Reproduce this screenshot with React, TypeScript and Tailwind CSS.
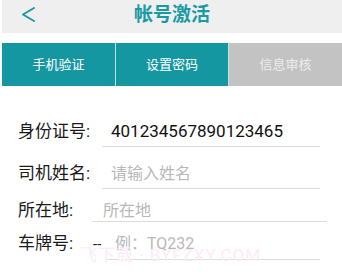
import React from "react";

const font = { fontFamily: 'Roboto, "Noto Sans CJK SC", sans-serif' };

export default function App() {
  return (
    <div
      className="relative w-[342px] h-[275px] bg-white overflow-hidden font-['Roboto','Noto_Sans_CJK_SC',sans-serif]"
      style={font}
    >
      {/* Header */}
      <div className="ml-[2px] h-[33px] bg-[#efefef] relative flex items-center justify-center">
        <svg
          className="absolute left-[19px] top-[6px]"
          width="15"
          height="17"
          viewBox="0 0 15 17"
          fill="none"
        >
          <polyline
            points="13,2 2,8.5 13,15"
            stroke="#1a9aa5"
            strokeWidth="2"
            strokeLinecap="round"
            strokeLinejoin="round"
          />
        </svg>
        <span className="text-[19px] leading-[24px] font-bold text-[#1a9aa5] -mt-[3px]">
          帐号激活
        </span>
      </div>

      {/* Tabs */}
      <div className="ml-[2px] mt-[10px] h-[43px] flex gap-px bg-[#bfe3e5]">
        <div className="w-[113px] bg-[#1597a1] flex items-center justify-center text-[13px] text-white">
          手机验证
        </div>
        <div className="w-[112px] bg-[#1597a1] flex items-center justify-center text-[13px] text-white">
          设置密码
        </div>
        <div className="flex-1 bg-[#c3c3c3] flex items-center justify-center text-[13px] text-[#ececec]">
          信息审核
        </div>
      </div>

      {/* Form */}
      <div className="pl-[18px]">
        <div className="mt-[33px] flex items-baseline">
          <span className="w-[84px] text-[17px] leading-[24px] text-[#1a1a1a]">身份证号:</span>
          <div className="w-[218px] border-b border-[#dcdcdc] pl-[9px] pb-[3px] text-[17px] leading-[24px] text-[#111]">
            401234567890123465
          </div>
        </div>
        <div className="mt-[14px] flex items-baseline">
          <span className="w-[84px] text-[17px] leading-[24px] text-[#1a1a1a]">司机姓名:</span>
          <div className="w-[218px] border-b border-[#dcdcdc] pl-[9px] pb-[2px] text-[16px] leading-[24px] text-[#b8b8b8]">
            请输入姓名
          </div>
        </div>
        <div className="mt-[11px] flex items-baseline">
          <span className="w-[74px] text-[17px] leading-[20px] text-[#1a1a1a]">所在地:</span>
          <div className="w-[235px] border-b border-[#dcdcdc] pl-[11px] text-[16px] leading-[20px] text-[#b8b8b8]">
            所在地
          </div>
        </div>
        <div className="mt-[9px] flex items-baseline">
          <span className="w-[75px] text-[17px] leading-[24px] text-[#1a1a1a]">车牌号:</span>
          <span className="w-[14px] text-[15px] leading-[24px] text-[#222]">--</span>
          <div className="w-[213px] border-b border-[#dcdcdc] pl-[8px] pb-[3px] text-[16px] leading-[24px] text-[#b8b8b8]">
            例：TQ232
          </div>
        </div>
      </div>

      {/* Watermark */}
      <div className="absolute left-[80px] top-[246px] text-[17px] leading-[18px] tracking-[1px] text-[#fdebf7] pointer-events-none whitespace-nowrap">
        飞下载 · BYFZXY.COM
      </div>
    </div>
  );
}
